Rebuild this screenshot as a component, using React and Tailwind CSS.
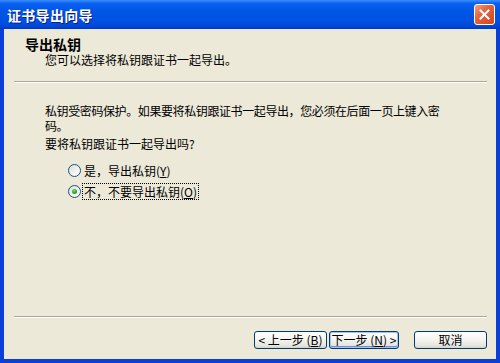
import React from "react";

function Mn({ children }) {
  return <span className="underline underline-offset-[1px]">{children}</span>;
}

function Radio({ checked }) {
  return (
    <span className="w-[13px] h-[13px] rounded-full border border-[#1c5180] bg-[linear-gradient(135deg,#dcdcd5_0%,#f0f0ec_50%,#ffffff_100%)] flex items-center justify-center shrink-0">
      {checked && (
        <span className="w-[5px] h-[5px] rounded-full bg-[radial-gradient(circle_at_40%_35%,#6fe06f_0%,#21a121_60%,#1a8a1a_100%)]" />
      )}
    </span>
  );
}

function Btn({ children, def, w }) {
  return (
    <div
      className={
        "h-[18px] rounded-[3px] border border-[#003c74] bg-[linear-gradient(to_bottom,#ffffff_0%,#f5f5f1_45%,#e6e6df_85%,#d6d0c5_100%)] flex items-center justify-center text-[12px] leading-[14px] text-black whitespace-pre " +
        (def ? "shadow-[inset_0_0_0_1px_#a8c3ee,inset_0_-1px_0_1px_#6d8fe0] " : "") +
        w
      }
    >
      {children}
    </div>
  );
}

export default function App() {
  return (
    <div className="w-[500px] h-[363px] flex flex-col font-['Noto_Sans_CJK_SC','Noto_Sans',sans-serif] text-black select-none">
      <div className="h-[29px] shrink-0 flex items-center justify-between pl-[7px] pr-[5px] bg-[linear-gradient(to_bottom,#3d8ef9_0%,#0a60f0_12%,#0056e6_35%,#0052e2_70%,#0048d8_90%,#0038c8_100%)]">
        <span className="text-white font-bold text-[14px] tracking-[0.3px] leading-[16px] [text-shadow:1px_1px_0_#0a1e8a]">
          证书导出向导
        </span>
        <div className="w-[21px] h-[21px] rounded-[3px] border border-white bg-[linear-gradient(135deg,#f0a184_0%,#e2643f_40%,#d2461f_100%)] flex items-center justify-center">
          <svg width="13" height="13" viewBox="0 0 13 13">
            <path d="M2.5 2.5 L10.5 10.5 M10.5 2.5 L2.5 10.5" stroke="#ffffff" strokeWidth="2" strokeLinecap="square" />
          </svg>
        </div>
      </div>
      <div className="flex-1 flex flex-col bg-[#ece9d8] border-x-4 border-b-4 border-[#0a3fd8]">
        <div className="pl-[21px] pt-[8px]">
          <div className="text-[14px] font-bold leading-[15px]">导出私钥</div>
          <div className="pl-[20px] text-[12px] leading-[15px]">您可以选择将私钥跟证书一起导出。</div>
        </div>
        <div className="mt-[14px] ml-[10px] mr-[9px] h-[2px] border-t border-t-[#aca899] border-b border-b-white" />
        <div className="flex-1 pl-[41px] mt-[20px] text-[12px] leading-[15px]">
          <p className="w-[412px] tracking-[-0.4px]">
            私钥受密码保护。如果要将私钥跟证书一起导出，您必须在后面一页上键入密码。
          </p>
          <div className="mt-[3px]">要将私钥跟证书一起导出吗?</div>
          <div className="pl-[23px] mt-[11px] flex items-center gap-[1px] h-[17px]">
            <Radio />
            <span className="border border-transparent px-[1px] leading-[15px]">
              是，导出私钥(<Mn>Y</Mn>)
            </span>
          </div>
          <div className="pl-[23px] mt-[4px] flex items-center gap-[1px] h-[17px]">
            <Radio checked />
            <span className="border border-dotted border-black px-[1px] leading-[15px]">
              不，不要导出私钥(<Mn>O</Mn>)
            </span>
          </div>
        </div>
        <div className="ml-[10px] mr-[9px] h-[2px] border-t border-t-[#aca899] border-b border-b-white" />
        <div className="flex justify-end items-start pr-[9px] pt-[13px] pb-[10px]">
          <Btn w="w-[73px]">{"< 上一步 "}(<Mn>B</Mn>)</Btn>
          <div className="w-[2px]" />
          <Btn w="w-[70px]" def>{"下一步 "}(<Mn>N</Mn>){" >"}</Btn>
          <div className="w-[15px]" />
          <Btn w="w-[73px]">取消</Btn>
        </div>
      </div>
    </div>
  );
}
